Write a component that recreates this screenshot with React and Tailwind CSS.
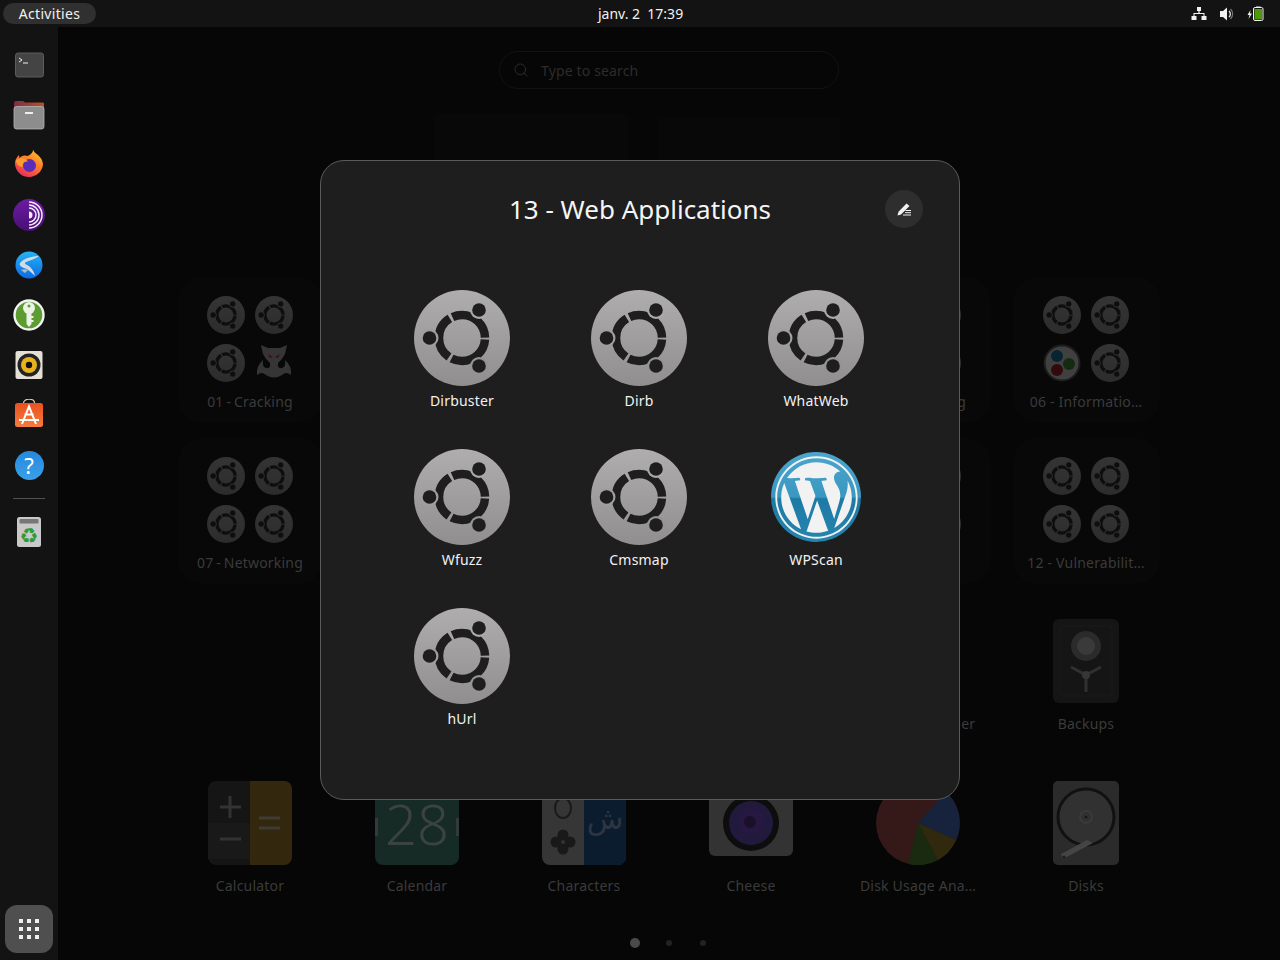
import React from 'react'
import { Search } from 'lucide-react'
import { FaWordpress } from 'react-icons/fa'

const font = { fontFamily: '"Noto Sans", "Open Sans", sans-serif' }

const UbuntuIcon = ({ size = 96 }) => (
    <svg width={size} height={size} viewBox="0 0 96 96" className="block">
        <defs>
            <linearGradient id="ubu" x1="0" y1="0" x2="0" y2="1">
                <stop offset="0" stopColor="#afadae" />
                <stop offset="1" stopColor="#908e8f" />
            </linearGradient>
        </defs>
        <circle cx="48" cy="48" r="48" fill="url(#ubu)" />
        <circle cx="48" cy="48" r="23" fill="none" stroke="#1e1e1e" strokeWidth="8.5" strokeDasharray="45.2 3" strokeDashoffset="-1.5" />
        <circle cx="65" cy="20" r="9" fill="#aba9aa" />
        <circle cx="15.5" cy="48" r="9" fill="#a09e9f" />
        <circle cx="65" cy="76" r="9" fill="#959394" />
        <circle cx="65" cy="20" r="6.8" fill="#1e1e1e" />
        <circle cx="15.5" cy="48" r="6.8" fill="#1e1e1e" />
        <circle cx="65" cy="76" r="6.8" fill="#1e1e1e" />
    </svg>
)

const WpIcon = () => (
    <div className="w-24 h-24 flex items-center justify-center">
        <div className="w-[90px] h-[90px] rounded-full bg-[linear-gradient(180deg,#4aa6cd_0%,#3a97c0_50%,#1d7aa5_52%,#2585ae_100%)] flex items-center justify-center">
            <FaWordpress className="text-[#f2f2f2]" size={85} />
        </div>
    </div>
)

const MaskIcon = () => (
    <svg width="38" height="38" viewBox="0 0 38 38" className="block">
        <path d="M6 1 L13 4 H25 L32 1 L30 10 Q27 16 23 19 Q22 25 27 24 Q31 23 30 16 Q37 22 36 31 Q31 27 27 31 Q19 36 11 31 Q7 27 2 31 Q1 22 8 16 Q7 23 11 24 Q16 25 15 19 Q11 16 8 10 Z" fill="#b0b0b0" />
        <path d="M13 10 L18 13 L15 14 Z M25 10 L20 13 L23 14 Z" fill="#e01010" />
    </svg>
)

const BallsIcon = () => (
    <svg width="38" height="38" viewBox="0 0 38 38" className="block">
        <circle cx="19" cy="19" r="17.5" fill="#d8d8d8" stroke="#555" strokeWidth="2" />
        <circle cx="14" cy="12" r="6" fill="#0b6fa8" />
        <circle cx="26" cy="20" r="6" fill="#2f8a2a" />
        <circle cx="14" cy="26" r="6" fill="#a01020" />
    </svg>
)

const CalcIcon = () => (
    <svg width="84" height="84" viewBox="0 0 84 84" className="block">
        <rect width="84" height="84" rx="8" fill="#151515" />
        <path d="M42 0 H76 a8 8 0 0 1 8 8 V76 a8 8 0 0 1 -8 8 H42 Z" fill="#33270d" />
        <rect x="0" y="42" width="42" height="36" fill="#191919" />
        <path d="M22 15 V37 M12 26 H33 M12 58 H33" stroke="#333" strokeWidth="3" />
        <path d="M51 37 H72 M51 47 H72" stroke="#3f3c38" strokeWidth="3" />
    </svg>
)

const CalendarIcon = () => (
    <div className="w-[84px] h-[84px] rounded-lg bg-[#162a26] flex items-center justify-between overflow-hidden">
        <div className="w-[3px] h-[18px] mt-2 bg-[#333b39]"></div>
        <span className="text-[56px] leading-none font-light text-[#3a4341]">28</span>
        <div className="w-[3px] h-[18px] mt-2 bg-[#333b39]"></div>
    </div>
)

const CharsIcon = () => (
    <svg width="84" height="84" viewBox="0 0 84 84" className="block">
        <rect width="84" height="84" rx="8" fill="#363636" />
        <path d="M42 0 H76 a8 8 0 0 1 8 8 V76 a8 8 0 0 1 -8 8 H42 Z" fill="#0b1c2f" />
        <ellipse cx="21" cy="27" rx="8" ry="10" fill="none" stroke="#191919" strokeWidth="2" />
        <g fill="#191919">
            <circle cx="21" cy="54" r="5.5" />
            <circle cx="21" cy="68" r="5.5" />
            <circle cx="14" cy="61" r="5.5" />
            <circle cx="28" cy="61" r="5.5" />
        </g>
        <text x="63" y="48" textAnchor="middle" fontSize="30" fill="#2d3540" fontFamily="Noto Sans, DejaVu Sans, sans-serif">ش</text>
    </svg>
)

const CheeseIcon = () => (
    <svg width="84" height="84" viewBox="0 0 84 84" className="block">
        <rect width="84" height="75" rx="6" fill="#333" />
        <circle cx="42" cy="42" r="28" fill="#0d0d0d" />
        <circle cx="42" cy="42" r="22" fill="#221a3c" />
        <circle cx="42" cy="40" r="13" fill="#261840" />
        <circle cx="41" cy="41" r="6" fill="#1c0f2a" />
    </svg>
)

const PieIcon = () => (
    <svg width="84" height="84" viewBox="0 0 84 84" className="block">
        <circle cx="42" cy="42" r="42" fill="#351818" />
        <path d="M42 42 L70 11 A42 42 0 0 1 80 59 Z" fill="#17233d" />
        <path d="M42 42 L80 59 A42 42 0 0 1 62 79 Z" fill="#30290e" />
        <path d="M42 42 L62 79 A42 42 0 0 1 32 83 Z" fill="#1a2a10" />
    </svg>
)

const DisksIcon = () => (
    <svg width="66" height="84" viewBox="0 0 66 84" className="block">
        <rect width="66" height="84" rx="5" fill="#2b2b2b" />
        <circle cx="33" cy="36" r="28" fill="#313131" stroke="#111" strokeWidth="3" />
        <circle cx="33" cy="36" r="6" fill="none" stroke="#3a3a3a" strokeWidth="2" />
        <circle cx="33" cy="36" r="1.5" fill="#181818" />
        <path d="M10 78 L40 62 L34 59 L8 73 Z" fill="#454545" />
        <circle cx="11" cy="76" r="1.5" fill="#1c1c1c" />
    </svg>
)

const BackupsIcon = () => (
    <svg width="66" height="84" viewBox="0 0 66 84" className="block">
        <rect width="66" height="84" rx="6" fill="#151515" />
        <rect x="7" y="7" width="52" height="70" rx="3" fill="none" stroke="#1b1b1b" />
        <circle cx="33" cy="27" r="15" fill="#2b2b2b" />
        <circle cx="33" cy="27" r="9" fill="#3a3a3a" />
        <path d="M18 48 L33 56 L48 48 M33 56 V73" stroke="#303030" strokeWidth="3" fill="none" />
        <circle cx="33" cy="56" r="4" fill="#363636" />
    </svg>
)

const Tile = ({ icons, label, tight = false }) => (
    <div className="h-[146px] rounded-3xl bg-[#080808] pt-[19px] flex flex-col items-center">
        <div className="grid grid-cols-[38px_38px] gap-[10px] opacity-[.27] h-[86px]">
            {icons.map((Icon, i) => <div key={i}>{Icon === 'u' ? <UbuntuIcon size={38} /> : <Icon />}</div>)}
        </div>
        <p className={tight ? "mt-[10px] text-sm leading-5 tracking-[.2px] [word-spacing:-1px] text-[#3b3b3b] whitespace-nowrap" : "mt-[10px] text-sm leading-5 tracking-[.2px] text-[#3b3b3b] whitespace-nowrap"}>{label}</p>
    </div>
)

const AppTile = ({ children, label, raised = false }) => (
    <div className={raised ? "h-[146px] pt-[20px] flex flex-col items-center" : "h-[146px] pt-[21px] flex flex-col items-center"}>
        <div className="h-[84px] flex items-start justify-center">{children}</div>
        <p className="mt-[11px] text-sm leading-5 tracking-[.2px] text-[#3b3b3b] whitespace-nowrap">{label}</p>
    </div>
)

const u4 = ['u', 'u', 'u', 'u']

const TerminalDock = () => (
    <svg width="32" height="32" viewBox="0 0 32 32">
        <rect x="2.5" y="4" width="28" height="24" rx="2.5" fill="#444" stroke="#5c5c5c" />
        <path d="M6 9 L9 11 L6 13" fill="none" stroke="#eee" strokeWidth="1" />
        <path d="M10 14 H15" stroke="#eee" strokeWidth="1" />
    </svg>
)

const FilesDock = () => (
    <svg width="32" height="32" viewBox="0 0 32 32">
        <defs>
            <linearGradient id="fold" x1="0" y1="0" x2="1" y2="0">
                <stop offset="0" stopColor="#7b2f47" />
                <stop offset="1" stopColor="#b8522a" />
            </linearGradient>
        </defs>
        <path d="M1 4 a2 2 0 0 1 2 -2 H10 L12 3.5 H29.5 a1.5 1.5 0 0 1 1.5 2 V12 H1 Z" fill="url(#fold)" />
        <rect x="1" y="7.5" width="30" height="22.5" rx="2.5" fill="#8d8d8d" stroke="#b5b5b5" strokeWidth=".8" />
        <rect x="12" y="13" width="8" height="2" fill="#eee" />
    </svg>
)

const FirefoxDock = () => (
    <svg width="32" height="32" viewBox="0 0 32 32">
        <defs>
            <linearGradient id="ff" x1="0.8" y1="0" x2="0.2" y2="1">
                <stop offset="0" stopColor="#ffc22e" />
                <stop offset=".45" stopColor="#ff7a2a" />
                <stop offset="1" stopColor="#e6255f" />
            </linearGradient>
        </defs>
        <path d="M20 0.5 C21 5 29 6 30 15 A14 14 0 1 1 2 13 C2.5 10 4 8 6 6 L6.5 9 C9 6 12 6 15 7 C18 5 20 4 20 0.5 Z" fill="url(#ff)" />
        <circle cx="16.5" cy="16.5" r="6.5" fill="#5a2cb8" />
        <path d="M3 11 C8 8 13 9 15 12.5 C11 12.5 9 14 10 18 C6 18 3 15 3 11 Z" fill="#ff9d2e" />
    </svg>
)

const TorDock = () => (
    <svg width="32" height="32" viewBox="0 0 32 32">
        <defs>
            <linearGradient id="tor" x1="0" y1="0" x2="0" y2="1">
                <stop offset="0" stopColor="#6d1ca3" />
                <stop offset="1" stopColor="#470f75" />
            </linearGradient>
        </defs>
        <circle cx="16" cy="16" r="16" fill="url(#tor)" />
        <path d="M16 12.5 A3.5 3.5 0 0 1 16 19.5 Z" fill="#f4ecf8" />
        <path d="M16 9 A7 7 0 0 1 16 23" fill="none" stroke="#f4ecf8" strokeWidth="1.5" />
        <path d="M16 6 A10 10 0 0 1 16 26" fill="none" stroke="#f4ecf8" strokeWidth="1.5" />
        <path d="M16 3 A13 13 0 0 1 16 29" fill="none" stroke="#f4ecf8" strokeWidth="1.5" />
    </svg>
)

const BirdDock = () => (
    <svg width="32" height="32" viewBox="0 0 32 32">
        <defs>
            <linearGradient id="bird" x1="0" y1="0" x2="0" y2="1">
                <stop offset="0" stopColor="#25b4f2" />
                <stop offset="1" stopColor="#0c6ae4" />
            </linearGradient>
        </defs>
        <circle cx="16" cy="16" r="13.5" fill="url(#bird)" />
        <path d="M26 7 C20 7 11 9 7 14 C6 16 8 18 11 19 C15 20 18 23 22 27 C21 22 18 18 14 16 C12 15 11 14 13 13 C17 11 22 10 26 7 Z" fill="#d5dbe2" />
        <path d="M8 21 C11 20 13 20 15 21 L12 24 Z" fill="#aebccb" />
    </svg>
)

const KeyDock = () => (
    <svg width="32" height="32" viewBox="0 0 32 32">
        <circle cx="16" cy="16" r="14.5" fill="#5c9c31" stroke="#f4f4f4" strokeWidth="2.4" />
        <circle cx="16" cy="9" r="6" fill="#ecf2e6" />
        <path d="M13.5 12 H18.5 V25 L16 28 L13.5 25 Z" fill="#ecf2e6" />
        <rect x="18" y="17" width="2.5" height="2" fill="#ecf2e6" />
        <rect x="18" y="21" width="2.5" height="2" fill="#ecf2e6" />
        <circle cx="16" cy="7" r="1.5" fill="#5c9c31" />
    </svg>
)

const SpeakerDock = () => (
    <svg width="32" height="32" viewBox="0 0 32 32">
        <rect x="2.5" y="2" width="27" height="28" rx="2" fill="#e4e0d6" />
        <circle cx="16" cy="16" r="11.5" fill="#222" />
        <circle cx="16" cy="16" r="8" fill="#e8b21c" />
        <circle cx="16" cy="16" r="3.2" fill="#111" />
    </svg>
)

const StoreDock = () => (
    <svg width="32" height="32" viewBox="0 0 32 32">
        <defs>
            <linearGradient id="store" x1="0" y1="0" x2="0" y2="1">
                <stop offset="0" stopColor="#e9511f" />
                <stop offset="1" stopColor="#f47c3e" />
            </linearGradient>
        </defs>
        <path d="M10.5 4 C10.5 -1 21.5 -1 21.5 4" fill="none" stroke="#e7c9a6" strokeWidth="1.2" />
        <rect x="2" y="4" width="28" height="24" rx="2.5" fill="url(#store)" />
        <path d="M9 25 L16 7.5 L23 25 M6 21 H26 M11.5 15.5 H20.5" fill="none" stroke="#fff" strokeWidth="2" />
    </svg>
)

const HelpDock = () => (
    <div className="w-[29px] h-[29px] rounded-full bg-gradient-to-b from-[#2489dd] to-[#3ba0e8] flex items-center justify-center text-white text-[22px] leading-[29px]">?</div>
)

const TrashDock = () => (
    <svg width="32" height="32" viewBox="0 0 32 32">
        <rect x="4" y="1" width="24" height="30" rx="2.5" fill="#c9c9c9" />
        <rect x="6.5" y="3" width="19" height="4.5" rx="1" fill="#777" />
        <text x="16" y="27" textAnchor="middle" fontSize="21" fill="#2e9a3a" fontFamily="DejaVu Sans, sans-serif">♻</text>
    </svg>
)

const dockApps = [TerminalDock, FilesDock, FirefoxDock, TorDock, BirdDock, KeyDock, SpeakerDock, StoreDock, HelpDock]

const folderApps = ['Dirbuster', 'Dirb', 'WhatWeb', 'Wfuzz', 'Cmsmap', 'WPScan', 'hUrl']

const App = () => {
    return (
        <div className="w-[1280px] h-[960px] relative overflow-hidden bg-[#060606] flex flex-col" style={font}>
            {/* top bar */}
            <div className="h-[27px] shrink-0 bg-[#131313] flex items-center justify-between pl-[3px] pr-[15px] text-[#f2f2f2]">
                <div className="w-[93px] h-[21px] rounded-full bg-[#303030] flex items-center justify-center text-sm tracking-[.3px]">Activities</div>
                <div className="absolute left-[598px] top-0 h-[27px] flex items-center text-sm whitespace-pre">janv. 2  17:39</div>
                <div className="flex items-center gap-[12px]">
                    <svg width="16" height="16" viewBox="0 0 16 16">
                        <path d="M6 1 H10 V5 H8.6 V7 H13.5 V10 H15.5 V14 H10.5 V10 H12.5 V8 H3.5 V10 H5.5 V14 H0.5 V10 H2.5 V7 H7.4 V5 H6 Z" fill="#f2f2f2" />
                    </svg>
                    <svg width="16" height="16" viewBox="0 0 16 16">
                        <path d="M1 5 H4 L8 1.5 V14.5 L4 11 H1 Z" fill="#f2f2f2" />
                        <path d="M10 5 A4 4 0 0 1 10 11" fill="none" stroke="#f2f2f2" strokeWidth="1.2" />
                        <path d="M11.5 3 A7 7 0 0 1 11.5 13" fill="none" stroke="#777" strokeWidth="1.2" />
                    </svg>
                    <svg width="18" height="16" viewBox="0 0 18 16">
                        <path d="M3.5 4 L0.5 9 H2.5 L1.5 13 L5 7.5 H3 Z" fill="#f2f2f2" />
                        <rect x="6.5" y="1.5" width="9.5" height="13" rx="1.5" fill="none" stroke="#f2f2f2" />
                        <rect x="9" y="0.5" width="4.5" height="1.2" fill="#f2f2f2" />
                        <rect x="7.5" y="3" width="7.5" height="10.5" fill="#4e9a06" />
                    </svg>
                </div>
            </div>

            <div className="flex flex-1 min-h-0">
                {/* dock */}
                <div className="w-[58px] shrink-0 bg-[#131313] pt-[13px] pb-[7px] flex flex-col items-center">
                    {dockApps.map((Icon, i) => (
                        <div key={i} className="h-[50px] w-full flex items-center justify-center"><Icon /></div>
                    ))}
                    <div className="w-8 h-px bg-[#505050] mt-2 mb-2"></div>
                    <div className="h-[50px] w-full flex items-center justify-center"><TrashDock /></div>
                    <div className="mt-auto w-12 h-12 rounded-xl bg-[#4f4f4f] grid grid-cols-3 gap-1 p-[14px]">
                        {Array.from({ length: 9 }).map((_, i) => <div key={i} className="w-1 h-1 bg-[#f0f0f0]"></div>)}
                    </div>
                </div>

                {/* overview */}
                <div className="flex-1 flex flex-col items-center pt-6">
                    <div className="w-[340px] h-[38px] shrink-0 rounded-full border border-[#121212] flex items-center pl-[13px] gap-3 text-[#2c2c2c] text-sm">
                        <Search size={16} strokeWidth={1.5} />
                        <span className="mt-[2px] tracking-[.15px]">Type to search</span>
                    </div>

                    <div className="mt-[188px] mr-[1px] grid grid-cols-[145px_145px_145px_145px_145px_147px] gap-x-[22px] gap-y-[15px]">
                        <Tile tight icons={['u', 'u', 'u', MaskIcon]} label="01 - Cracking" />
                        <div></div>
                        <div></div>
                        <div></div>
                        <Tile icons={u4} label="05 - Reporting" />
                        <Tile icons={['u', 'u', BallsIcon, 'u']} label="06 - Informatio…" />
                        <Tile tight icons={u4} label="07 - Networking" />
                        <div></div>
                        <div></div>
                        <div></div>
                        <Tile icons={u4} />
                        <Tile icons={u4} label="12 - Vulnerabilit…" />
                        <div></div>
                        <div></div>
                        <div></div>
                        <div></div>
                        <AppTile raised label="Archive Manager" />
                        <AppTile raised label="Backups"><BackupsIcon /></AppTile>
                        <AppTile label="Calculator"><CalcIcon /></AppTile>
                        <AppTile label="Calendar"><CalendarIcon /></AppTile>
                        <AppTile label="Characters"><CharsIcon /></AppTile>
                        <AppTile label="Cheese"><CheeseIcon /></AppTile>
                        <AppTile label="Disk Usage Ana…"><PieIcon /></AppTile>
                        <AppTile label="Disks"><DisksIcon /></AppTile>
                    </div>

                    <div className="mt-[30px] flex">
                        <div className="w-[34px] h-[14px] flex items-center justify-center"><div className="w-[10px] h-[10px] rounded-full bg-[#4a4a4a]"></div></div>
                        <div className="w-[34px] h-[14px] flex items-center justify-center"><div className="w-[6px] h-[6px] rounded-full bg-[#222]"></div></div>
                        <div className="w-[34px] h-[14px] flex items-center justify-center"><div className="w-[6px] h-[6px] rounded-full bg-[#222]"></div></div>
                    </div>
                </div>
            </div>

            {/* faint shapes behind the folder */}
            <div className="absolute left-[435px] top-[113px] w-[193px] h-[60px] rounded-t bg-[#080808]"></div>
            <div className="absolute left-[658px] top-[118px] w-[182px] h-[60px] rounded-t bg-[#080808]"></div>

            {/* open folder */}
            <div className="absolute left-[320px] top-[160px] w-[640px] h-[640px] rounded-3xl bg-[#1e1e1e] border border-[#5b5b5b] flex flex-col items-center">
                <div className="w-full relative h-[98px] flex items-center justify-center">
                    <h1 className="text-[26px] leading-none text-[#f5f5f5] mt-[-3px]">13 - Web Applications</h1>
                    <button className="absolute right-[36px] top-[29px] w-[38px] h-[38px] rounded-full bg-[#2e2e2e] flex items-center justify-center">
                        <svg width="16" height="16" viewBox="0 0 16 16">
                            <path d="M1.5 14.5 L2.5 10.8 L10.5 2.5 L13.5 5 L5 13.5 Z" fill="#f2f2f2" />
                            <path d="M9.5 9.5 H15 M9 11.7 H15 M7 14 H15" stroke="#f2f2f2" strokeWidth="1" />
                        </svg>
                    </button>
                </div>
                <div className="mt-[31px] grid grid-cols-[repeat(3,177px)] auto-rows-[159px] ml-[-2px]">
                    {folderApps.map(name => (
                        <div key={name} className="flex flex-col items-center">
                            {name === 'WPScan' ? <WpIcon /> : <UbuntuIcon />}
                            <span className="mt-[5px] text-sm leading-5 tracking-[.2px] text-[#f2f2f2]">{name}</span>
                        </div>
                    ))}
                </div>
            </div>
        </div>
    )
}

export default App
